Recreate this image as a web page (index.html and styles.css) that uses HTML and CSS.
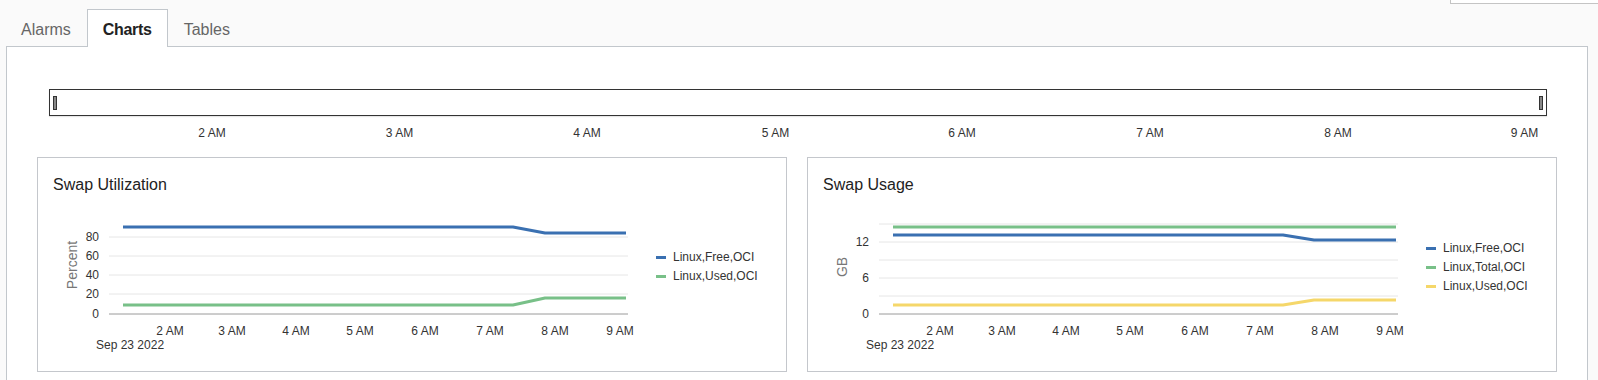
FILE: index.html
```html
<!DOCTYPE html>
<html lang="en">

<head>
    <meta charset="utf-8">
    <meta name="viewport" content="width=device-width, initial-scale=1">
    <link rel="stylesheet" href="styles.css">
</head>

<body>
    <div class="topbar">
        <div class="search"></div>
    </div>
    <div class="tabs">
        <div class="tab">Alarms</div>
        <div class="tab active">Charts</div>
        <div class="tab">Tables</div>
    </div>
    <div class="panel">
        <div class="slider">
            <span class="handle"></span>
            <span class="handle"></span>
        </div>
        <svg class="overview-axis" width="1498" height="24">
            <g class="tick">
                <text x="163" y="21">2 AM</text>
                <text x="350.5" y="21">3 AM</text>
                <text x="538" y="21">4 AM</text>
                <text x="726.5" y="21">5 AM</text>
                <text x="913" y="21">6 AM</text>
                <text x="1101" y="21">7 AM</text>
                <text x="1289" y="21">8 AM</text>
                <text x="1475.5" y="21">9 AM</text>
            </g>
        </svg>
        <div class="charts">
            <div class="card">
                <div class="card-title">Swap Utilization</div>
                <div class="card-body">
                    <svg class="plot" width="600" height="160">
                        <g class="grid">
                            <line x1="56" x2="575" y1="37" y2="37"></line>
                            <line x1="56" x2="575" y1="56" y2="56"></line>
                            <line x1="56" x2="575" y1="75" y2="75"></line>
                            <line x1="56" x2="575" y1="94" y2="94"></line>
                        </g>
                        <line class="baseline" x1="56" x2="575" y1="114" y2="114"></line>
                        <g class="ylabels">
                            <text x="46" y="41">80</text>
                            <text x="46" y="60">60</text>
                            <text x="46" y="79">40</text>
                            <text x="46" y="98">20</text>
                            <text x="46" y="118">0</text>
                        </g>
                        <text class="ytitle" transform="translate(19,65) rotate(-90)" y="5">Percent</text>
                        <polyline class="series blue" points="70,27 460,27 492,33 573,33"></polyline>
                        <polyline class="series green" points="70,105 460,105 492,98 573,98"></polyline>
                        <g class="tick">
                            <text x="117" y="135">2 AM</text>
                            <text x="179" y="135">3 AM</text>
                            <text x="243" y="135">4 AM</text>
                            <text x="307" y="135">5 AM</text>
                            <text x="372" y="135">6 AM</text>
                            <text x="437" y="135">7 AM</text>
                            <text x="502" y="135">8 AM</text>
                            <text x="567" y="135">9 AM</text>
                        </g>
                        <text class="date" x="43" y="149">Sep 23 2022</text>
                    </svg>
                    <div class="legend">
                        <div class="legend-item"><span class="swatch blue"></span>Linux,Free,OCI</div>
                        <div class="legend-item"><span class="swatch green"></span>Linux,Used,OCI</div>
                    </div>
                </div>
            </div>
            <div class="card">
                <div class="card-title">Swap Usage</div>
                <div class="card-body">
                    <svg class="plot" width="600" height="160">
                        <g class="grid">
                            <line x1="56" x2="575" y1="24" y2="24"></line>
                            <line x1="56" x2="575" y1="42" y2="42"></line>
                            <line x1="56" x2="575" y1="60" y2="60"></line>
                            <line x1="56" x2="575" y1="78" y2="78"></line>
                            <line x1="56" x2="575" y1="96" y2="96"></line>
                        </g>
                        <line class="baseline" x1="56" x2="575" y1="114" y2="114"></line>
                        <g class="ylabels">
                            <text x="46" y="46">12</text>
                            <text x="46" y="82">6</text>
                            <text x="46" y="118">0</text>
                        </g>
                        <text class="ytitle" transform="translate(19,67) rotate(-90)" y="5">GB</text>
                        <polyline class="series green" points="70,27 573,27"></polyline>
                        <polyline class="series blue" points="70,35 460,35 491,40 573,40"></polyline>
                        <polyline class="series yellow" points="70,105 460,105 491,100 573,100"></polyline>
                        <g class="tick">
                            <text x="117" y="135">2 AM</text>
                            <text x="179" y="135">3 AM</text>
                            <text x="243" y="135">4 AM</text>
                            <text x="307" y="135">5 AM</text>
                            <text x="372" y="135">6 AM</text>
                            <text x="437" y="135">7 AM</text>
                            <text x="502" y="135">8 AM</text>
                            <text x="567" y="135">9 AM</text>
                        </g>
                        <text class="date" x="43" y="149">Sep 23 2022</text>
                    </svg>
                    <div class="legend">
                        <div class="legend-item"><span class="swatch blue"></span>Linux,Free,OCI</div>
                        <div class="legend-item"><span class="swatch green"></span>Linux,Total,OCI</div>
                        <div class="legend-item"><span class="swatch yellow"></span>Linux,Used,OCI</div>
                    </div>
                </div>
            </div>
        </div>
    </div>
</body>

</html>
```

FILE: styles.css
```css
body {
    margin: 0;
    background: #fafafa;
    font-family: "Liberation Sans", Arial, sans-serif;
    color: #333;
    overflow: hidden;
}

.topbar {
    display: flex;
    justify-content: flex-end;
    height: 4px;
}

.search {
    width: 148px;
    height: 4px;
    box-sizing: border-box;
    background: #fff;
    border-left: 1px solid #c4c4c4;
    border-bottom: 1px solid #c4c4c4;
}

.tabs {
    display: flex;
    margin: 5px 0 0 5px;
}

.tab {
    font-size: 16px;
    line-height: 32px;
    padding: 4px 15px 0;
    border: 1px solid transparent;
    border-bottom: none;
    color: #666;
}

.tab.active {
    background: #fff;
    border-color: #c2c7cc;
    color: #222;
    font-weight: bold;
    margin-bottom: -1px;
    position: relative;
    letter-spacing: -0.3px;
}

.panel {
    margin: 0 10px 0 6px;
    background: #fff;
    border: 1px solid #c2c7cc;
    padding: 42px 30px 20px;
    height: 400px;
}

.slider {
    display: flex;
    justify-content: space-between;
    align-items: center;
    height: 27px;
    box-sizing: border-box;
    margin: 0 10px 0 12px;
    padding: 0 3px;
    border: 1px solid #333;
    box-shadow: 0 1px 1px #e6e6e6;
}

.handle {
    width: 2px;
    height: 12px;
    border: 1px solid #333;
    background: #888;
}

.overview-axis {
    display: block;
    margin-left: 12px;
}

.tick text {
    font-size: 12px;
    fill: #333;
    text-anchor: middle;
}

.charts {
    display: grid;
    grid-template-columns: 1fr 1fr;
    gap: 20px;
    margin-top: 17px;
}

.card {
    height: 215px;
    box-sizing: border-box;
    border: 1px solid #c4c7cc;
    padding: 17px 15px;
}

.card-title {
    font-size: 16px;
    line-height: 20px;
    color: #222;
}

.card-body {
    display: flex;
    margin-top: 5px;
}

.plot {
    display: block;
    flex: none;
}

.grid line {
    stroke: #e6e6e6;
    stroke-width: 1;
}

.baseline {
    stroke: #9a9a9a;
    stroke-width: 1;
}

.ylabels text {
    font-size: 12px;
    fill: #333;
    text-anchor: end;
}

.ytitle {
    font-size: 14px;
    fill: #777;
    text-anchor: middle;
}

.date {
    font-size: 12px;
    fill: #333;
}

.series {
    fill: none;
    stroke-width: 3;
    stroke-linejoin: round;
}

.series.blue {
    stroke: #3a70b1;
}

.series.green {
    stroke: #78c088;
}

.series.yellow {
    stroke: #f5d76a;
}

.legend {
    display: flex;
    flex-direction: column;
    justify-content: center;
    height: 94px;
    margin: 20px 0 0 3px;
}

.legend-item {
    display: flex;
    align-items: center;
    font-size: 12px;
    line-height: 19px;
    color: #333;
}

.swatch {
    width: 10px;
    height: 3px;
    margin-right: 7px;
}

.swatch.blue {
    background: #3a70b1;
}

.swatch.green {
    background: #78c088;
}

.swatch.yellow {
    background: #f5d76a;
}
```
